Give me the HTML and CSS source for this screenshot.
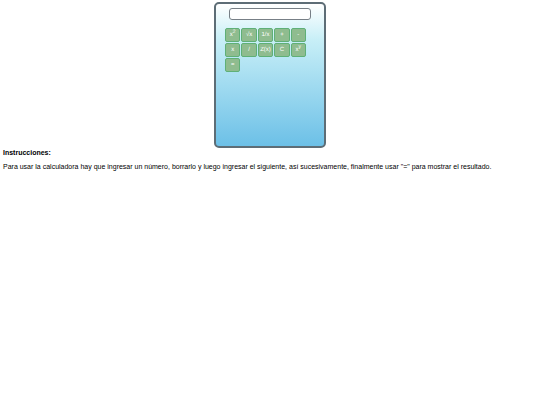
FILE: index.html
```
<!DOCTYPE html>
<html lang="es">
<head>
  <meta charset="UTF-8" />
  <meta name="viewport" content="width=device-width, initial-scale=1.0" />
  <title>Calculadora</title>
  <link rel="stylesheet" href="styles.css">
</head>
<body>
  <form class="calculadora" id="calculadora">
    <input type="text" class="pantalla" id="pantalla" aria-label="Pantalla" autocomplete="off" />
    <div class="botones">
      <button type="button" data-op="cuadrado">x<sup>2</sup></button>
      <button type="button" data-op="raiz">√x</button>
      <button type="button" data-op="inverso">1/x</button>
      <button type="button" data-op="suma">+</button>
      <button type="button" data-op="resta">-</button>
      <button type="button" data-op="producto">x</button>
      <button type="button" data-op="division">/</button>
      <button type="button" data-op="entero">Z(x)</button>
      <button type="button" data-op="borrar">C</button>
      <button type="button" data-op="potencia">x<sup>y</sup></button>
      <button type="button" data-op="igual">=</button>
    </div>
  </form>

  <div class="instrucciones">
    <h4>Instrucciones:</h4>
    <p>Para usar la calculadora hay que ingresar un número, borrarlo y luego ingresar el siguiente, así sucesivamente, finalmente usar "=" para mostrar el resultado.</p>
  </div>

  <script>
    const pantalla = document.getElementById('pantalla');
    let anterior = 0;
    let pendiente = '';

    const unarias = {
      cuadrado: x => x * x,
      raiz: x => Math.sqrt(x),
      inverso: x => 1 / x,
      entero: x => Math.trunc(x)
    };
    const binarias = {
      suma: (a, b) => a + b,
      resta: (a, b) => a - b,
      producto: (a, b) => a * b,
      division: (a, b) => a / b,
      potencia: (a, b) => Math.pow(a, b)
    };

    function operar(op) {
      const valor = Number(pantalla.value);
      if (unarias[op]) {
        pantalla.value = unarias[op](valor);
      } else if (binarias[op]) {
        anterior = valor;
        pendiente = op;
      } else if (op === 'borrar') {
        pantalla.value = '';
      } else if (pendiente) {
        pantalla.value = binarias[pendiente](anterior, valor);
        pendiente = '';
      }
    }

    document.querySelectorAll('.botones button').forEach(boton => {
      boton.addEventListener('click', () => operar(boton.dataset.op));
    });
    document.getElementById('calculadora').addEventListener('submit', e => {
      e.preventDefault();
      operar('igual');
    });
  </script>
</body>
</html>
```
FILE: styles.css
```
* {
  margin: 0;
  padding: 0;
  box-sizing: border-box;
  font-family: Arial, "Liberation Sans", sans-serif;
}
body {
  padding: 2px 3px;
  background-color: white;
  color: black;
  font-size: 7px;
  line-height: 8px;
}
.calculadora {
  width: 112px;
  min-height: 146px;
  margin: 0 auto;
  padding: 4px 9px;
  border: 2px solid #5d6d76;
  border-radius: 5px;
  background: linear-gradient(#ffffff, #c8eff7 25%, #6cc0e7);
}
.pantalla {
  display: block;
  width: 82px;
  height: 12px;
  margin: 0 auto 8px;
  padding: 0 3px;
  border: 1px solid #777f86;
  border-radius: 3px;
  background-color: white;
  font-size: 7px;
}
.botones {
  display: grid;
  grid-template-columns: repeat(5, 1fr);
  gap: 1px;
  width: 81px;
}
.botones button {
  height: 14px;
  border: 1px solid #5fb077;
  border-radius: 2px;
  background-color: #8fbc8f;
  color: white;
  font-size: 6px;
  line-height: 12px;
  text-rendering: geometricPrecision;
  cursor: pointer;
}
.botones button:hover {
  background-color: #7aac7a;
}
.botones sup {
  font-size: 5px;
  line-height: 0;
}
.instrucciones h4 {
  margin: 1px 0 6px;
  font-size: 7px;
}
```
